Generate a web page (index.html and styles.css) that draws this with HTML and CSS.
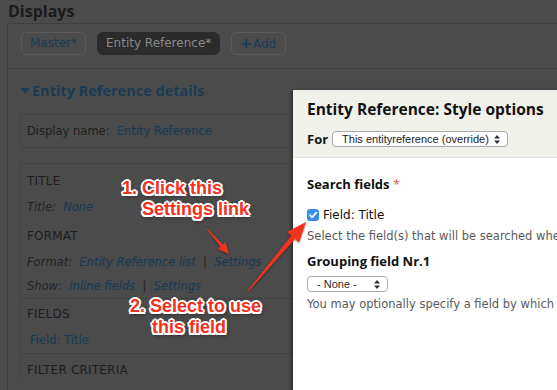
FILE: index.html
```html
<!DOCTYPE html>
<html>
<head>
<meta charset="utf-8">
<link rel="stylesheet" href="styles.css">
</head>
<body>
<div class="page">
  <h1 class="displays-title">Displays</h1>
  <div class="displays-box">
    <span class="tab">Master*</span>
    <span class="tab tab-active">Entity Reference*</span>
    <span class="tab tab-add"><b class="plus">+</b>Add</span>
  </div>
  <div class="details-panel">
    <h2 class="details-title"><svg class="caret" width="10" height="6" viewBox="0 0 10 6"><path d="M0 0H10L5 6Z" fill="#1b3c55"/></svg>Entity Reference details</h2>
    <div class="name-box">Display name:&nbsp; <span class="link">Entity Reference</span></div>
    <div class="column-box">
      <div class="bucket">
        <div class="bucket-label">TITLE</div>
        <div class="row row-title italic">Title:&nbsp; <span class="link">None</span></div>
        <div class="bucket-label label-gap">FORMAT</div>
        <div class="row row-format italic">Format:&nbsp; <span class="link">Entity Reference list</span>&nbsp; |&nbsp;&nbsp;<span class="link">Settings</span></div>
        <div class="row row-show italic">Show:&nbsp; <span class="link">Inline fields</span>&nbsp; |&nbsp;&nbsp;<span class="link">Settings</span></div>
      </div>
      <div class="bucket bucket-sep">
        <div class="bucket-label">FIELDS</div>
        <div class="row field-row"><span class="link">Field: Title</span></div>
      </div>
      <div class="bucket bucket-sep bucket-filter">
        <div class="bucket-label">FILTER CRITERIA</div>
      </div>
    </div>
  </div>
</div>

<div class="modal">
  <div class="modal-head">
    <div class="modal-title">Entity Reference: Style options</div>
    <div class="for-row">
      <span class="for-label">For</span>
      <span class="select select-for">This entityreference (override)<svg class="updown" width="6" height="9" viewBox="0 0 6 9"><path d="M3 0L6 3.5H0Z M3 9L6 5.5H0Z" fill="#333"/></svg></span>
    </div>
  </div>
  <div class="modal-body">
    <div class="field-label">Search fields <span class="req">*</span></div>
    <div class="check-row">
      <span class="checkbox"><svg width="12" height="12" viewBox="0 0 12 12"><path d="M3 6.2L5.1 8.4L9.2 3.6" fill="none" stroke="#fff" stroke-width="1.7" stroke-linecap="round" stroke-linejoin="round"/></svg></span>
      <span>Field: Title</span>
    </div>
    <div class="desc">Select the field(s) that will be searched when using the autocomplete widget.</div>
    <div class="field-label group-label">Grouping field Nr.1</div>
    <span class="select select-none">- None -<svg class="updown" width="6" height="9" viewBox="0 0 6 9"><path d="M3 0L6 3.5H0Z M3 9L6 5.5H0Z" fill="#333"/></svg></span>
    <div class="desc desc2">You may optionally specify a field by which to group the records.</div>
  </div>
</div>

<div class="note note-1">1. Click this<br><span class="indent-1">Settings link</span></div>
<div class="note note-2">2. Select to use<br><span class="indent-2">this field</span></div>

<svg class="arrows" width="557" height="390" viewBox="0 0 557 390">
  <g fill="#f2341d">
    <polygon points="206.6,229.3 207.4,228.7 222.8,244.7 225.5,242.4 229,254 217.9,249.0 220.6,246.7"/>
    <polygon points="247.6,290.7 248.4,291.3 295.0,238.9 299.2,242.5 306,222 287.0,232.1 291.2,235.7"/>
  </g>
</svg>
</body>
</html>
```

FILE: styles.css
```css
body {
  margin: 0;
  width: 557px;
  height: 390px;
  overflow: hidden;
  position: relative;
  background: #4b4b4b;
  font-family: "DejaVu Sans", "Open Sans", sans-serif;
}

.page {
  width: 700px;
  padding: 2px 0 0 8px;
}

.displays-title {
  margin: 0;
  font-family: "Open Sans", "DejaVu Sans", sans-serif;
  font-size: 16px;
  line-height: 18px;
  font-weight: bold;
  color: #1b1b1b;
}

.displays-box {
  margin: 3px 0 0 -1px;
  border: 1px solid #3f3f3f;
  border-bottom: none;
  padding: 8px 13px 13px;
  display: flex;
  gap: 11px;
}

.tab {
  height: 21px;
  line-height: 21px;
  border: 1px solid #5a5a5a;
  border-radius: 6px;
  padding: 0 8px;
  font-size: 12px;
  color: #1b3c55;
}

.tab-active {
  background: #2b2b2b;
  border-color: #2b2b2b;
  color: #8a8a8a;
}

.tab-add {
  padding: 0 9px 0 8px;
}

.plus {
  font-size: 14px;
  font-weight: bold;
  margin-right: 1px;
}

.details-panel {
  margin-left: -1px;
  border-left: 1px solid #3f3f3f;
  border-top: 1px solid #3f3f3f;
  padding: 0 0 0 12px;
  height: 400px;
}

.details-title {
  margin: 12px 0 0;
  font-family: "Open Sans", "DejaVu Sans", sans-serif;
  font-size: 14.5px;
  line-height: 20px;
  font-weight: bold;
  color: #1a3b55;
  display: flex;
  align-items: center;
}

.caret {
  margin-right: 2px;
}

.name-box {
  margin-top: 13px;
  border: 1px solid #434343;
  height: 32px;
  line-height: 32px;
  padding-left: 6px;
  font-size: 11.5px;
  color: #1e1e1e;
}

.link {
  color: #183a54;
}

.column-box {
  margin-top: 15px;
  border-left: 1px solid #434343;
  border-top: 1px solid #434343;
}

.bucket {
  padding: 8px 0 0 6px;
}

.bucket-sep {
  border-top: 1px solid #414141;
  padding-top: 6px;
}

.bucket-filter {
  padding-top: 7px;
}

.bucket-label {
  font-size: 12px;
  line-height: 18px;
  color: #1e1e1e;
  font-weight: 500;
  letter-spacing: 0.2px;
}

.label-gap {
  margin-top: 8px;
}

.row {
  font-size: 11.5px;
  line-height: 24px;
  color: #242424;
}

.row-title {
  margin-top: 5px;
}

.row-format {
  margin-top: 5px;
}

.italic {
  font-style: italic;
}

.field-row {
  padding-left: 3px;
  margin-top: 5px;
  margin-bottom: 1px;
}

.modal {
  position: absolute;
  left: 293px;
  top: 90px;
  width: 300px;
  height: 310px;
  background: #fff;
  box-shadow: -2px 0 3px rgba(0, 0, 0, 0.35);
}

.modal-head {
  background: #f1f1ec;
  padding: 9px 14px 9px;
  border-bottom: 1px solid #e4e4e0;
}

.modal-title {
  font-family: "Open Sans", "DejaVu Sans", sans-serif;
  font-size: 15.5px;
  line-height: 20px;
  font-weight: bold;
  color: #111;
  white-space: nowrap;
}

.for-row {
  margin-top: 11px;
  display: flex;
  align-items: center;
  gap: 4px;
}

.for-label {
  font-family: "Open Sans", "DejaVu Sans", sans-serif;
  font-size: 13px;
  font-weight: bold;
  color: #111;
}

.select {
  box-sizing: border-box;
  height: 16px;
  display: inline-flex;
  align-items: center;
  justify-content: space-between;
  border: 1px solid #aaa;
  border-radius: 4px;
  background: #fff;
  font-family: "Liberation Sans", Arial, sans-serif;
  font-size: 11px;
  color: #222;
  padding: 0 7px 0 9px;
  white-space: nowrap;
}

.select-for {
  width: 176px;
}

.select-none {
  width: 81px;
  margin-top: 6px;
  color: #3a2626;
}

.modal-body {
  padding: 17px 14px 0;
  white-space: nowrap;
}

.field-label {
  font-family: "Open Sans", "DejaVu Sans", sans-serif;
  font-size: 13px;
  line-height: 18px;
  font-weight: bold;
  color: #111;
}

.req {
  color: #e0585b;
  font-weight: normal;
}

.check-row {
  margin-top: 14px;
  display: flex;
  align-items: center;
  gap: 4px;
  font-size: 12px;
  line-height: 16px;
  color: #111;
}

.checkbox {
  width: 12px;
  height: 12px;
  border-radius: 3px;
  background: #3b8ce6;
  display: flex;
}

.desc {
  margin-top: 5px;
  font-size: 11.5px;
  line-height: 16px;
  color: #5a5a5a;
}

.group-label {
  margin-top: 8px;
}

.desc2 {
  margin-top: 4px;
}

.note {
  position: absolute;
  font-family: "Liberation Sans", Arial, sans-serif;
  font-weight: bold;
  font-size: 18px;
  line-height: 21px;
  color: #f2321c;
  white-space: nowrap;
  text-shadow:
    -1.5px -1.5px 0 #fff, 1.5px -1.5px 0 #fff, -1.5px 1.5px 0 #fff, 1.5px 1.5px 0 #fff,
    0 -2px 0 #fff, 0 2px 0 #fff, -2px 0 0 #fff, 2px 0 0 #fff,
    1px 2px 4px rgba(0, 0, 0, 0.75);
}

.note-1 {
  left: 122px;
  top: 178px;
}

.indent-1 {
  padding-left: 20px;
}

.note-2 {
  left: 130px;
  top: 296px;
}

.indent-2 {
  padding-left: 22px;
}

.arrows {
  position: absolute;
  left: 0;
  top: 0;
  pointer-events: none;
  filter: drop-shadow(0 1px 1px rgba(0, 0, 0, 0.4));
}
```
